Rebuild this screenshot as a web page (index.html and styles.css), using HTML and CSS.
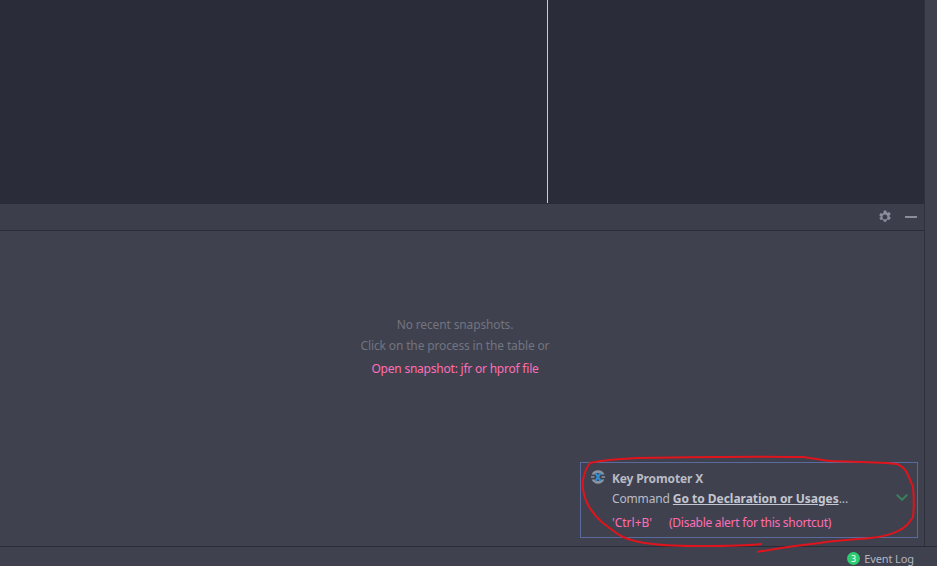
FILE: index.html
```html
<!DOCTYPE html>
<html lang="en">
<head>
<meta charset="utf-8">
<title>Profiler</title>
<link rel="stylesheet" href="styles.css">
</head>
<body>
<div class="app">
  <div class="workspace">
    <div class="content">
      <div class="editor">
        <div class="pane-left"></div>
        <div class="pane-right"></div>
      </div>
      <div class="tool-header">
        <svg class="gear" width="14" height="14" viewBox="0 0 14 14">
          <path fill="#8a8e9c" fill-rule="evenodd" d="M5.700 0.500h2.600l.4 1.800 1 .5 1.700-.7 1.400 2.200-1.400 1.200v1.100l1.400 1.200-1.400 2.300-1.700-.7-1 .5-.4 1.800H5.700l-.4-1.800-1-.5-1.700.7-1.400-2.300L2.600 7.600V6.500L1.200 5.300l1.400-2.200 1.700.7 1-.5zM7 4.500a2.500 2.500 0 1 0 0 5 2.500 2.500 0 0 0 0-5z"/>
        </svg>
        <span class="minimize"></span>
      </div>
      <div class="tool-body">
        <p class="hint first">No recent snapshots.</p>
        <p class="hint">Click on the process in the table or</p>
        <p class="link">Open snapshot: jfr or hprof file</p>
      </div>
    </div>
    <div class="strip"></div>
  </div>
  <div class="status">
    <span class="badge">3</span>
    <span class="status-label">Event Log</span>
  </div>

  <div class="balloon">
    <div class="balloon-title">
      <svg class="kpx" width="16" height="16" viewBox="0 0 16 16">
        <path d="M1.600 5.500A7 7 0 0 1 14.400 5.500H11.200L10 4H6L4.800 5.500zM1.600 10.500H4.800L6 12H10L11.200 10.500H14.400A7 7 0 0 1 1.600 10.500z" fill="#8f939f"/>
        <path d="M1 8h3.500M11.500 8H15" stroke="#8f939f" stroke-width="1.500"/>
        <path d="M5.500 4l5 8M10.500 4l-5 8" stroke="#2f8fd0" stroke-width="2.200" fill="none"/>
      </svg>
      <strong>Key Promoter X</strong>
    </div>
    <div class="balloon-line"><span class="cmd">Command</span> <span class="action">Go to Declaration or Usages</span>...</div>
    <div class="balloon-keys"><span class="keys">'Ctrl+B'</span><span>(Disable alert for this shortcut)</span></div>
    <svg class="chevron" width="12" height="7" viewBox="0 0 12 7">
      <path d="M0.800 0.800L6 5.800 11.200 0.800" fill="none" stroke="#3c7f5a" stroke-width="2"/>
    </svg>
  </div>

  <svg class="scribble" width="937" height="566" viewBox="0 0 937 566">
    <path d="M762 544C742 546 722 546 703 546C685 546 668 546 653 544C642 543 632 541 623 537C615 533 610 528 603 523C597 518 591 511 587 503C584 496 582 488 583 480C584 474 586 468 590 463C600 460 620 459 637 458C690 457 750 456 803 457C812 458 820 460 831 461C855 462 880 462 897 464C902 466 905 469 907 473C909 477 911 482 913 487C914 497 914 507 913 517C910 522 906 527 900 530C893 534 880 537 870 538C850 540 830 541 820 543C800 545 780 548 757 552" fill="none" stroke="#e0141c" stroke-width="2"/>
  </svg>
</div>
</body>
</html>
```
FILE: styles.css
```css
* { box-sizing: border-box; }
html, body { margin: 0; height: 100%; }
body { font-family: "Noto Sans", "Open Sans", sans-serif; font-size: 12px; background: #3f414e; overflow: hidden; }
.app { position: relative; width: 937px; height: 566px; display: flex; flex-direction: column; }
.workspace { flex: 0 0 547px; display: flex; border-bottom: 1px solid #2a2c37; }
.content { width: 925px; display: flex; flex-direction: column; border-right: 1px solid #2e303c; }
.editor { flex: 0 0 204px; display: flex; background: #2a2c39; padding-bottom: 1px; }
.pane-left { width: 548px; border-right: 1px solid #c9cbd6; }
.pane-right { flex: 1; }
.tool-header { flex: 0 0 27px; display: flex; align-items: center; justify-content: flex-end; gap: 13px; padding-right: 7px; background: #3c3e4c; border-bottom: 1px solid #2a2c37; }
.gear { display: block; }
.minimize { width: 12px; height: 2px; background: #8a8e9c; }
.tool-body { flex: 1; background: #3f414e; padding-top: 86px; padding-right: 14px; text-align: center; }
.tool-body p { margin: 0; line-height: 16px; }
.hint { color: #727480; margin-top: 5px !important; letter-spacing: -0.14px; }
.hint.first { margin-top: 0 !important; }
.link { color: #ff6eb4; margin-top: 7px !important; letter-spacing: -0.22px; }
.strip { flex: 1; background: #3f414e; }
.status { flex: 1; display: flex; align-items: center; justify-content: flex-end; padding-right: 23px; background: #3f414e; color: #b4b6c0; font-size: 11px; padding-top: 4px; }
.badge { width: 13px; height: 13px; border-radius: 50%; background: #2ecc71; color: #fff; font-size: 9px; line-height: 13px; text-align: center; margin-right: 4px; }
.status-label { letter-spacing: -0.1px; }
.balloon { position: absolute; left: 580px; top: 462px; width: 338px; height: 76px; border: 1px solid #5a6a9c; background: #3f414e; padding: 7px 0 0 31px; color: #b9bbc5; }
.balloon-title { line-height: 18px; height: 18px; letter-spacing: -0.14px; }
.balloon-title strong { font-weight: 700; color: #b9bbc5; }
.kpx { position: absolute; left: 9px; top: 6px; }
.balloon-line { line-height: 18px; margin-top: 2px; letter-spacing: -0.03px; }
.cmd { letter-spacing: -0.15px; }
.action { font-weight: 700; text-decoration: underline; color: #c4c6d0; }
.balloon-keys { color: #ff6eb4; line-height: 18px; margin-top: 6px; display: flex; gap: 17px; letter-spacing: -0.28px; }
.keys { letter-spacing: 0; }
.chevron { position: absolute; left: 315px; top: 31px; }
.scribble { position: absolute; left: 0; top: 0; pointer-events: none; }
```
